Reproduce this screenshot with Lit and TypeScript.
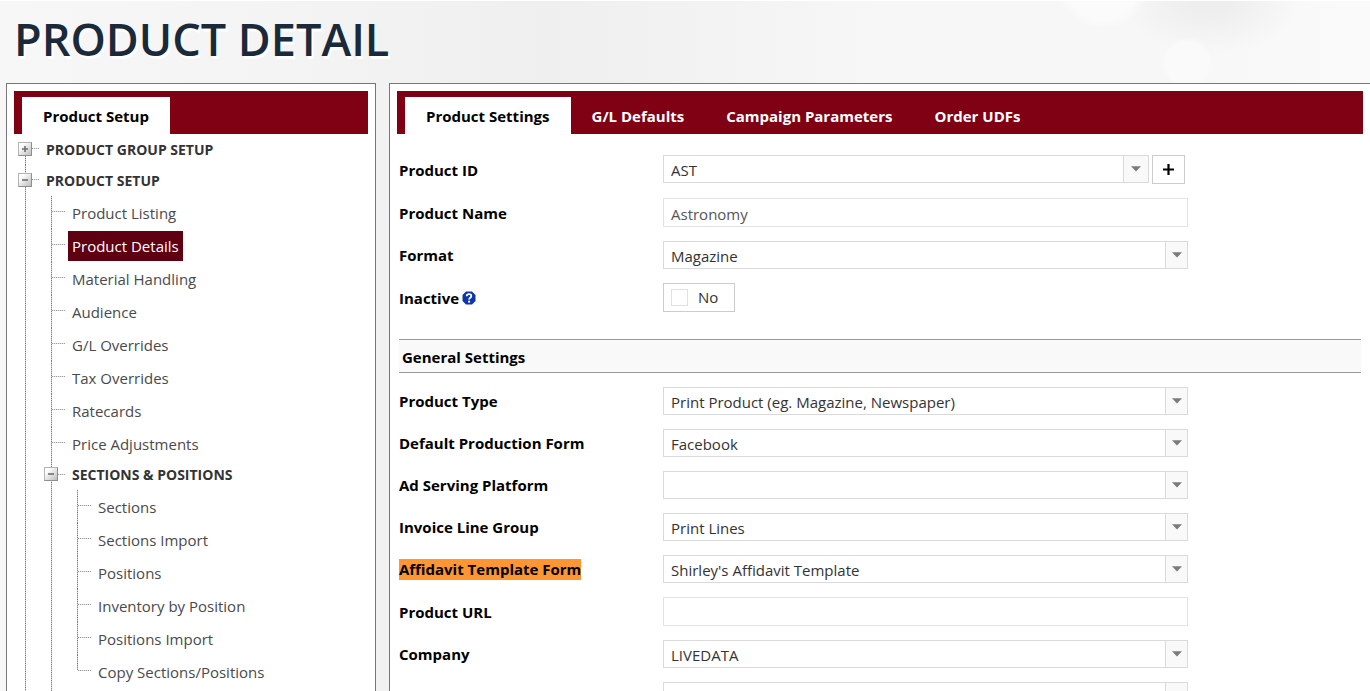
import { LitElement, html, css, nothing } from "lit";
import { customElement } from "lit/decorators.js";
import { classMap } from "lit/directives/class-map.js";

interface TreeNode {
  label: string;
  open?: boolean;
  selected?: boolean;
  children?: TreeNode[];
}

const TREE: TreeNode[] = [
  { label: "PRODUCT GROUP SETUP", open: false, children: [] },
  {
    label: "PRODUCT SETUP",
    open: true,
    children: [
      { label: "Product Listing" },
      { label: "Product Details", selected: true },
      { label: "Material Handling" },
      { label: "Audience" },
      { label: "G/L Overrides" },
      { label: "Tax Overrides" },
      { label: "Ratecards" },
      { label: "Price Adjustments" },
      {
        label: "SECTIONS & POSITIONS",
        open: true,
        children: [
          { label: "Sections" },
          { label: "Sections Import" },
          { label: "Positions" },
          { label: "Inventory by Position" },
          { label: "Positions Import" },
          { label: "Copy Sections/Positions" },
        ],
      },
    ],
  },
];

@customElement("setup-tree")
class SetupTree extends LitElement {
  static styles = css`
    :host {
      display: block;
      font-size: 15px;
    }
    ul {
      list-style: none;
      margin: 0;
      padding: 0;
    }
    .root {
      padding-left: 4px;
    }
    .nested {
      padding-left: 26px;
    }
    .nested .nested {
      padding-bottom: 12px;
    }
    .node {
      background: repeating-linear-gradient(#808080 0 1px, #cfcfcf 1px 2px) 7px 0 / 1px 100% no-repeat;
    }
    .root > .node:first-child {
      background-position: 7px 14px;
    }
    .nested .nested > .node:last-child {
      background-size: 1px 15px;
    }
    .row {
      display: flex;
      align-items: center;
      height: 33px;
    }
    .group {
      height: 31px;
    }
    .nested .group {
      height: 30px;
    }
    .dots {
      width: 13px;
      height: 1px;
      margin: 0 3px 2px 8px;
      background: repeating-linear-gradient(90deg, #9a9a9a 0 1px, #e6e6e6 1px 2px);
    }
    .group .dots {
      width: 7px;
      margin-left: 0;
    }
    .toggle {
      width: 14px;
      height: 14px;
      margin: 0 0 2px;
      padding: 0;
      border: 1px solid #b4b4b4;
      border-right-color: #8e8e8e;
      border-bottom-color: #8e8e8e;
      background: linear-gradient(135deg, #fff 20%, #bdbdbd);
    }
    .toggle svg {
      display: block;
    }
    .link {
      padding: 0 4px;
      line-height: 30px;
      color: #4a4a4a;
      text-decoration: none;
    }
    .group .link {
      font-size: 14px;
      font-weight: 700;
      color: #333;
    }
    .selected {
      background: #5f0012;
      color: #fff;
    }
  `;

  private renderNode(node: TreeNode): unknown {
    const group = node.children !== undefined;
    return html`<li class="node">
      <div class=${classMap({ row: true, group })}>
        ${group
          ? html`<button class="toggle" type="button" aria-label=${node.open ? "Collapse" : "Expand"}>
              <svg width="12" height="12" viewBox="0 0 12 12" stroke="#6e6e6e" stroke-width="1.6">
                <path d=${node.open ? "M3 6h6" : "M3 6h6M6 3v6"} />
              </svg>
            </button>`
          : nothing}
        <span class="dots"></span>
        <a class=${classMap({ link: true, selected: !!node.selected })} href="#">${node.label}</a>
      </div>
      ${node.open ? html`<ul class="nested">${node.children!.map((c) => this.renderNode(c))}</ul>` : nothing}
    </li>`;
  }

  render() {
    return html`<ul class="root">${TREE.map((n) => this.renderNode(n))}</ul>`;
  }
}

@customElement("tab-bar")
class TabBar extends LitElement {
  static properties = { tabs: { type: Array } };
  declare tabs: string[];

  static styles = css`
    :host {
      display: flex;
      height: 37px;
      padding: 6px 0 0 8px;
      background: #800014;
    }
    .tab {
      padding: 2px 21px 0;
      border: 0;
      background: none;
      font: 700 15px/35px "Open Sans", "Noto Sans", sans-serif;
      color: #fff;
    }
    .active {
      background: #fff;
      color: #000;
    }
  `;

  render() {
    return (this.tabs ?? []).map(
      (t, i) => html`<button type="button" class=${classMap({ tab: true, active: i === 0 })}>${t}</button>`
    );
  }
}

interface Field {
  id: string;
  label: string;
  kind: "select" | "text" | "check";
  value: string;
  addable?: boolean;
  help?: boolean;
  found?: boolean;
}

const IDENTITY: Field[] = [
  { id: "pid", label: "Product ID", kind: "select", value: "AST", addable: true },
  { id: "pname", label: "Product Name", kind: "text", value: "Astronomy" },
  { id: "format", label: "Format", kind: "select", value: "Magazine" },
  { id: "inactive", label: "Inactive", kind: "check", value: "No", help: true },
];

const GENERAL: Field[] = [
  { id: "ptype", label: "Product Type", kind: "select", value: "Print Product (eg. Magazine, Newspaper)" },
  { id: "pform", label: "Default Production Form", kind: "select", value: "Facebook" },
  { id: "adserv", label: "Ad Serving Platform", kind: "select", value: "" },
  { id: "invline", label: "Invoice Line Group", kind: "select", value: "Print Lines" },
  { id: "affidavit", label: "Affidavit Template Form", kind: "select", value: "Shirley's Affidavit Template", found: true },
  { id: "url", label: "Product URL", kind: "text", value: "" },
  { id: "company", label: "Company", kind: "select", value: "LIVEDATA" },
  { id: "sub", label: "Sub Company", kind: "select", value: "" },
];

@customElement("product-form")
class ProductForm extends LitElement {
  static styles = css`
    :host {
      display: block;
      padding: 21px 2px 0;
      font-size: 15px;
    }
    .fields {
      display: flex;
      flex-direction: column;
      gap: 14px;
    }
    .field {
      display: grid;
      grid-template-columns: 264px minmax(0, 525px);
      align-items: center;
    }
    .caption {
      display: flex;
      align-items: center;
      gap: 3px;
      padding-top: 1px;
      font-weight: 700;
      line-height: 21px;
      color: #000;
    }
    .found {
      background: #ff9632;
    }
    .control {
      display: flex;
      align-items: flex-start;
      gap: 3px;
    }
    .combo {
      display: grid;
      grid-template-columns: minmax(0, 1fr) 23px;
      flex: 1;
    }
    .combo.wide {
      grid-template-columns: minmax(0, 1fr) 26px;
    }
    .box {
      box-sizing: border-box;
      width: 100%;
      height: 29px;
      margin: 0;
      padding: 2px 7px 0;
      border: 1px solid #e2e2e2;
      border-radius: 0;
      background: #fff;
      font: 15px/21px "Open Sans", "Noto Sans", sans-serif;
      color: #555;
    }
    .select {
      grid-area: 1 / 1 / 2 / 3;
      height: 28px;
      border-color: #dadada;
      appearance: none;
      color: #333;
    }
    .arrow {
      grid-area: 1 / 2;
      display: grid;
      place-items: center;
      border: 1px solid #dadada;
      background: #f9f9f9;
      pointer-events: none;
    }
    .add {
      width: 33px;
      height: 29px;
      padding: 0;
      border: 1px solid #ccc;
      background: #fff;
    }
    .add svg {
      display: block;
      margin: auto;
    }
    .spacer {
      width: 0;
    }
    .check {
      box-sizing: border-box;
      display: flex;
      align-items: center;
      gap: 10px;
      width: 72px;
      height: 29px;
      padding: 0 7px 1px;
      border: 1px solid #ccc;
      background: #fff;
      line-height: 21px;
      color: #333;
    }
    .tick {
      appearance: none;
      width: 17px;
      height: 17px;
      margin: 0;
      border: 1px solid #e0e0e0;
      background: #fff;
    }
    .section {
      margin: 27px 0 14px;
      padding: 2px 3px 0;
      border: solid #999;
      border-width: 1px 0;
      background: #f9f9f9;
      font-size: 15px;
      font-weight: 700;
      line-height: 30px;
      color: #000;
    }
  `;

  private control(f: Field) {
    if (f.kind === "text") {
      return html`<input class="box" id=${f.id} type="text" .value=${f.value} />`;
    }
    if (f.kind === "check") {
      return html`<span class="check">
        <input class="tick" id=${f.id} type="checkbox" /><span>${f.value}</span>
      </span>`;
    }
    return html`<div class=${classMap({ combo: true, wide: !!f.addable })}>
        <select class="box select" id=${f.id}>
          <option>${f.value}</option>
        </select>
        <span class="arrow">
          <svg width="10" height="6" viewBox="0 0 10 6"><path d="M0 0.3h10L5 5.6z" fill="#7b7b7b" /></svg>
        </span>
      </div>
      ${f.addable
        ? html`<button class="add" type="button" aria-label="Add product">
              <svg width="11" height="11" viewBox="0 0 11 11"><path d="M5.5 0v11M0 5.5h11" stroke="#000" stroke-width="2.2" /></svg>
            </button>
            <span class="spacer"></span>`
        : nothing}`;
  }

  private field(f: Field) {
    return html`<div class="field">
      <div class="caption">
        <label class=${classMap({ found: !!f.found })} for=${f.id}>${f.label}</label>
        ${f.help
          ? html`<svg width="14" height="14" viewBox="0 0 14 14" role="img" aria-label="Help">
              <path d="M4 .5h6L13.5 4v6L10 13.5H4L.5 10V4z" fill="#0d34a8" />
              <path d="M4.7 5.2C4.7 2.3 9.4 2.4 9.3 5.1C9.2 6.7 7.1 6.7 7.1 8.5" fill="none" stroke="#fff" stroke-width="1.8" />
              <circle cx="7.1" cy="10.7" r="1.1" fill="#fff" />
            </svg>`
          : nothing}
      </div>
      <div class="control">${this.control(f)}</div>
    </div>`;
  }

  render() {
    return html`
      <div class="fields">${IDENTITY.map((f) => this.field(f))}</div>
      <h2 class="section">General Settings</h2>
      <div class="fields">${GENERAL.map((f) => this.field(f))}</div>
    `;
  }
}

@customElement("app-root")
class AppRoot extends LitElement {
  static styles = css`
    :host {
      box-sizing: border-box;
      display: flex;
      flex-direction: column;
      height: 100vh;
      overflow: hidden;
      border-top: 1px solid #fff;
      background:
        radial-gradient(circle at 1187px 62px, #fafafa 21px, transparent 26px),
        radial-gradient(circle at 1103px -20px, #fbfbfb 38px, transparent 48px),
        radial-gradient(ellipse at 1210px 0, #eeeeee 20px, transparent 90px),
        linear-gradient(90deg, #f7f7f7, #f4f4f4 20%, #efefef 40%, #f2f2f2 50%, #f7f7f7 65%, #f7f7f7 85%, #fafafa);
      font-family: "Open Sans", "Noto Sans", sans-serif;
    }
    .title {
      margin: 0;
      padding: 5px 14px 11px;
      font-size: 45px;
      font-weight: 600;
      line-height: 66px;
      color: #1b2a3b;
      text-shadow: 2px 3px 1px #fff;
    }
    .columns {
      display: flex;
      flex: 1;
      gap: 13px;
      min-height: 0;
      padding-left: 6px;
    }
    .panel {
      box-sizing: border-box;
      padding: 7px;
      border: 1px solid #777;
      border-bottom: 0;
      background: #fff;
    }
    .side {
      flex: 0 0 370px;
    }
    .main {
      flex: 1;
      min-width: 0;
      border-right: 0;
    }
  `;

  render() {
    return html`
      <h1 class="title">PRODUCT DETAIL</h1>
      <div class="columns">
        <nav class="panel side">
          <tab-bar .tabs=${["Product Setup"]}></tab-bar>
          <setup-tree></setup-tree>
        </nav>
        <main class="panel main">
          <tab-bar .tabs=${["Product Settings", "G/L Defaults", "Campaign Parameters", "Order UDFs"]}></tab-bar>
          <product-form></product-form>
        </main>
      </div>
    `;
  }
}
